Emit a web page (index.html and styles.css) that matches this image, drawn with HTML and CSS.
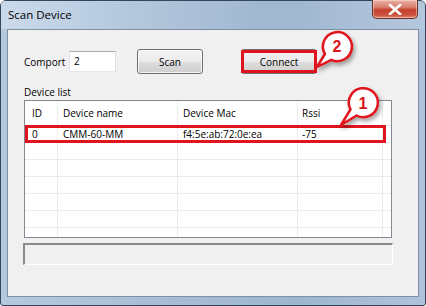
FILE: index.html
```html
<!DOCTYPE html>
<html>
<head>
<meta charset="utf-8">
<link rel="stylesheet" href="styles.css">
</head>
<body>
<div class="window">
  <div class="titlebar">
    <span class="title">Scan Device</span>
    <div class="close">
      <svg width="14" height="11" viewBox="0 0 14 11"><path d="M2 1 L12 10 M12 1 L2 10" stroke="#ffffff" stroke-width="2.6" stroke-linecap="square"/></svg>
    </div>
  </div>
  <div class="client">
    <div class="toolbar">
      <span class="lbl">Comport</span>
      <div class="input">2</div>
      <button class="btn scan">Scan</button>
      <button class="btn connect">Connect</button>
    </div>
    <div class="section-label">Device list</div>
    <div class="list">
      <div class="row head">
        <div class="cell c-id">ID</div><div class="cell">Device name</div><div class="cell">Device Mac</div><div class="cell c-rssi">Rssi</div><div class="cell last"></div>
      </div>
      <div class="row">
        <div class="cell c-id">0</div><div class="cell">CMM-60-MM</div><div class="cell">f4:5e:ab:72:0e:ea</div><div class="cell c-rssi">-75</div><div class="cell last"></div>
      </div>
      <div class="row"><div class="cell c-id"></div><div class="cell"></div><div class="cell"></div><div class="cell c-rssi"></div><div class="cell last"></div></div>
      <div class="row"><div class="cell c-id"></div><div class="cell"></div><div class="cell"></div><div class="cell c-rssi"></div><div class="cell last"></div></div>
      <div class="row"><div class="cell c-id"></div><div class="cell"></div><div class="cell"></div><div class="cell c-rssi"></div><div class="cell last"></div></div>
      <div class="row"><div class="cell c-id"></div><div class="cell"></div><div class="cell"></div><div class="cell c-rssi"></div><div class="cell last"></div></div>
      <div class="row"><div class="cell c-id"></div><div class="cell"></div><div class="cell"></div><div class="cell c-rssi"></div><div class="cell last"></div></div>
      <div class="row"><div class="cell c-id"></div><div class="cell"></div><div class="cell"></div><div class="cell c-rssi"></div><div class="cell last"></div></div>
    </div>
    <div class="status"></div>
  </div>
  <svg class="overlay" width="426" height="306" viewBox="0 0 426 306">
    <defs>
      <filter id="sh" x="-50%" y="-50%" width="200%" height="200%">
        <feDropShadow dx="2" dy="3" stdDeviation="2" flood-color="#000" flood-opacity="0.35"/>
      </filter>
    </defs>
    <rect x="242.5" y="51.5" width="73" height="20" fill="none" stroke="#e0141e" stroke-width="3"/>
    <rect x="26.5" y="126.5" width="358" height="15" fill="none" stroke="#e0141e" stroke-width="3"/>
    <path filter="url(#sh)" d="M331.3 59.8 L317 67 L324.9 54 A14.5 14.5 0 1 1 331.3 59.8 Z" fill="#ffffff" stroke="#e0141e" stroke-width="2.5" stroke-linejoin="round"/>
    <text x="337" y="52" class="num">2</text>
    <path filter="url(#sh)" d="M356.6 115.5 L341 125 L350.5 109.4 A14.5 14.5 0 1 1 356.6 115.5 Z" fill="#ffffff" stroke="#e0141e" stroke-width="2.5" stroke-linejoin="round"/>
    <text x="363" y="109" class="num">1</text>
  </svg>
</div>
</body>
</html>
```

FILE: styles.css
```css
* { box-sizing: border-box; }
html, body { margin: 0; padding: 0; background: #ffffff; }
body { width: 426px; height: 306px; overflow: hidden; font-family: "Open Sans", "Noto Sans", sans-serif; }

.window {
  position: relative;
  width: 426px;
  height: 306px;
  border: 1px solid #34465a;
  border-radius: 6px 6px 3px 3px;
  background: linear-gradient(to right, #b5c9de 0%, #a7bdd5 40%, #9fb6d0 70%, #aec3da 100%);
  display: flex;
  flex-direction: column;
  padding: 0 6px 8px 6px;
}

.titlebar {
  height: 28px;
  flex: none;
  display: flex;
  justify-content: space-between;
  align-items: flex-start;
  margin: 0 -6px;
  padding: 0 7px 0 7px;
  background: linear-gradient(to right, rgba(220,232,244,0.55) 0%, rgba(200,216,234,0.3) 30%, rgba(170,190,212,0) 60%, rgba(190,208,228,0.3) 100%);
}
.title {
  font-size: 11.5px;
  color: #000;
  line-height: 16px;
  margin-top: 6px;
}
.close {
  width: 46px;
  height: 19px;
  margin-top: -1px;
  border: 1px solid #6b2f28;
  border-top: none;
  border-radius: 0 0 5px 5px;
  background: linear-gradient(to bottom, #e9b1a6 0%, #d9806f 40%, #c4402c 55%, #cc5440 85%, #e08a70 100%);
  box-shadow: inset 0 0 0 1px rgba(255,230,220,0.5);
  display: flex;
  align-items: center;
  justify-content: center;
}

.client {
  flex: 1;
  background: #f0f0f0;
  border: 1px solid #7f90a4;
  display: flex;
  flex-direction: column;
  padding-left: 16px;
  font-size: 10px;
  color: #000;
}

.toolbar {
  display: flex;
  align-items: center;
  height: 25px;
  margin-top: 19px;
}
.lbl { width: 45px; line-height: 14px; }
.input {
  width: 47px;
  height: 21px;
  background: #ffffff;
  border: 1px solid #abadb3;
  border-left-color: #e2e3ea;
  border-right-color: #dbdfe6;
  border-bottom-color: #e3e9ef;
  padding-left: 4px;
  line-height: 19px;
}
.btn {
  font-family: "Open Sans", "Noto Sans", sans-serif;
  font-size: 10px;
  color: #000;
  height: 25px;
  border: 1px solid #707070;
  border-radius: 3px;
  background: linear-gradient(to bottom, #f2f2f2 0%, #ebebeb 50%, #dddddd 51%, #cfcfcf 100%);
  box-shadow: inset 0 0 0 1px rgba(255,255,255,0.7);
  padding: 0;
}
.scan { width: 66px; margin-left: 21px; }
.connect { width: 76px; margin-left: 38px; }

.section-label {
  margin-top: 11px;
  line-height: 14px;
  height: 14px;
}

.list {
  margin-top: 1px;
  width: 368px;
  height: 138px;
  background: #ffffff;
  border: 1px solid #828790;
  overflow: hidden;
}
.row {
  display: grid;
  grid-template-columns: 33px 120px 120px 85px 1fr;
  height: 17px;
}
.row.head { height: 25px; }
.cell {
  border-right: 1px solid #ececec;
  border-bottom: 1px solid #ececec;
  padding-left: 5px;
  line-height: 16px;
  white-space: nowrap;
}
.head .cell { line-height: 24px; }
.cell.c-id { padding-left: 7px; }
.cell.c-rssi { padding-left: 4px; }
.cell.last { border-right: none; }

.status {
  margin-top: 5px;
  margin-left: -1px;
  width: 370px;
  height: 22px;
  border-top: 2px solid #8a8a8a;
  border-left: 2px solid #8a8a8a;
  border-right: 1px solid #ffffff;
  border-bottom: 1px solid #ffffff;
  background: #f0f0f0;
}

.overlay {
  position: absolute;
  left: -1px;
  top: -1px;
  pointer-events: none;
}
.num {
  font-family: "Liberation Sans", Arial, sans-serif;
  font-weight: bold;
  font-size: 16px;
  fill: #d8141c;
  text-anchor: middle;
}
```
